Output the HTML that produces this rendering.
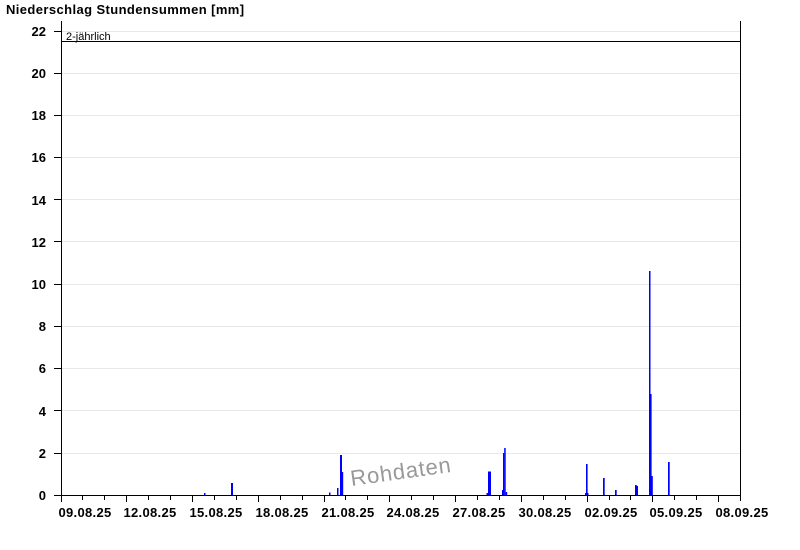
<!DOCTYPE html>
<html><head><meta charset="utf-8"><style>
html,body{margin:0;padding:0;background:#fff;width:800px;height:550px;overflow:hidden}
svg{display:block}
text{font-family:"Liberation Sans",Arial,sans-serif}
</style></head><body>
<svg width="800" height="550" xmlns="http://www.w3.org/2000/svg">
<text x="6" y="14" font-size="13" font-weight="bold" fill="#000" letter-spacing="0.4">Niederschlag Stundensummen [mm]</text>
<g stroke="#e8e8e8" stroke-width="1">
<line x1="61" y1="73.5" x2="740" y2="73.5"/><line x1="61" y1="115.5" x2="740" y2="115.5"/>
<line x1="61" y1="157.5" x2="740" y2="157.5"/><line x1="61" y1="199.5" x2="740" y2="199.5"/>
<line x1="61" y1="241.5" x2="740" y2="241.5"/><line x1="61" y1="284.5" x2="740" y2="284.5"/>
<line x1="61" y1="326.5" x2="740" y2="326.5"/><line x1="61" y1="368.5" x2="740" y2="368.5"/>
<line x1="61" y1="410.5" x2="740" y2="410.5"/><line x1="61" y1="453.5" x2="740" y2="453.5"/>
<line x1="61" y1="31.5" x2="740" y2="31.5"/>
</g>
<g font-size="13" font-weight="bold" text-anchor="end" fill="#000">
<text x="46" y="500">0</text><text x="46" y="458">2</text><text x="46" y="416">4</text>
<text x="46" y="373">6</text><text x="46" y="331">8</text><text x="46" y="289">10</text>
<text x="46" y="247">12</text><text x="46" y="205">14</text><text x="46" y="162">16</text>
<text x="46" y="120">18</text><text x="46" y="78">20</text><text x="46" y="36">22</text>
</g>
<g stroke="#000" stroke-width="1">
<line x1="54" y1="495.5" x2="61" y2="495.5"/><line x1="54" y1="453.5" x2="61" y2="453.5"/>
<line x1="54" y1="410.5" x2="61" y2="410.5"/><line x1="54" y1="368.5" x2="61" y2="368.5"/>
<line x1="54" y1="326.5" x2="61" y2="326.5"/><line x1="54" y1="284.5" x2="61" y2="284.5"/>
<line x1="54" y1="241.5" x2="61" y2="241.5"/><line x1="54" y1="199.5" x2="61" y2="199.5"/>
<line x1="54" y1="157.5" x2="61" y2="157.5"/><line x1="54" y1="115.5" x2="61" y2="115.5"/>
<line x1="54" y1="73.5" x2="61" y2="73.5"/><line x1="54" y1="31.5" x2="61" y2="31.5"/>
<line x1="61" y1="41.5" x2="740" y2="41.5"/>
</g>
<text x="66" y="40" font-size="11" fill="#000">2-jährlich</text>
<text x="349" y="479" font-size="22" fill="#999" letter-spacing="0.8" transform="rotate(-8 400 465)">Rohdaten</text>
<g fill="#0000ff">
<rect x="204" y="493" width="1.5" height="2"/>
<rect x="231" y="483" width="2" height="12"/>
<rect x="329" y="492.5" width="1.5" height="2.5"/>
<rect x="337" y="488" width="1.5" height="7"/>
<rect x="340" y="455" width="2" height="40"/>
<rect x="342" y="472" width="1.2" height="23"/>
<rect x="486.5" y="493" width="1.5" height="2"/>
<rect x="488" y="471.5" width="3" height="23.5"/>
<rect x="502" y="490" width="1.2" height="5"/>
<rect x="503" y="453" width="1.3" height="42"/>
<rect x="504.2" y="448" width="1.5" height="47"/>
<rect x="505.7" y="492" width="1.5" height="3"/>
<rect x="585" y="493" width="1.2" height="2"/>
<rect x="586" y="464" width="1.6" height="31"/>
<rect x="587.5" y="493" width="1" height="2"/>
<rect x="603" y="478" width="1.7" height="17"/>
<rect x="615" y="490" width="1.7" height="5"/>
<rect x="635" y="485" width="1.7" height="10"/>
<rect x="636.5" y="486" width="1.5" height="9"/>
<rect x="649" y="271" width="1.5" height="224"/>
<rect x="650.3" y="394" width="1.3" height="101"/>
<rect x="651.5" y="476" width="1.3" height="19"/>
<rect x="668" y="462" width="1.7" height="33"/>
</g>
<g stroke="#000" stroke-width="1">
<line x1="61.5" y1="21" x2="61.5" y2="501"/>
<line x1="740.5" y1="21" x2="740.5" y2="501"/>
<line x1="54" y1="495.5" x2="741" y2="495.5"/>
</g>
<g stroke="#000" stroke-width="1" id="ticks"></g>
<g font-size="13" font-weight="bold" fill="#000" letter-spacing="0.3" id="xl"></g>
<script>
var t=document.getElementById('ticks'),xl=document.getElementById('xl'),ns='http://www.w3.org/2000/svg';
var labels=['09.08.25','12.08.25','15.08.25','18.08.25','21.08.25','24.08.25','27.08.25','30.08.25','02.09.25','05.09.25','08.09.25'];
for(var d=0;d<=31;d++){var x=Math.round(60.5+d*21.92)+0.5;var l=document.createElementNS(ns,'line');
l.setAttribute('x1',x);l.setAttribute('x2',x);l.setAttribute('y1',495);l.setAttribute('y2',d%3==0?502:500);t.appendChild(l);
if(d%3==0){var tx=document.createElementNS(ns,'text');tx.setAttribute('x',x-3);tx.setAttribute('y',517);tx.textContent=labels[d/3];xl.appendChild(tx);}}
</script>
</svg>
</body></html>
